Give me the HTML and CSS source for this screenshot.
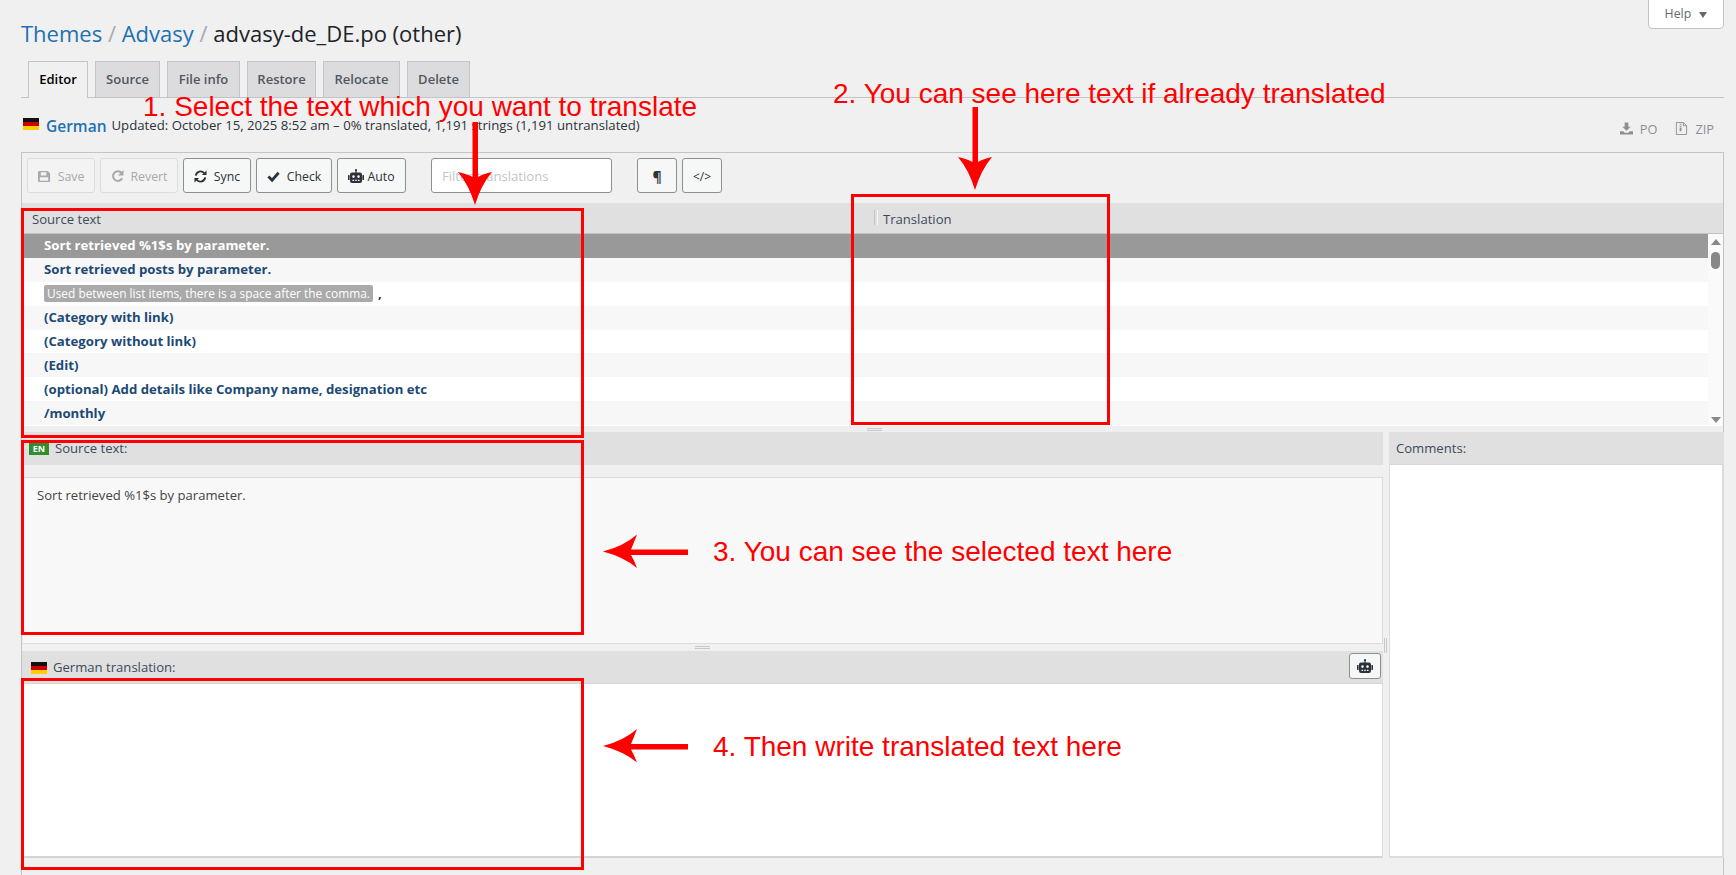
FILE: index.html
```html
<!DOCTYPE html>
<html lang="en">
<head>
<meta charset="utf-8">
<title>Advasy translation editor</title>
<link rel="stylesheet" href="styles.css">
</head>
<body>
<svg class="defs" width="0" height="0" aria-hidden="true">
  <symbol id="i-robot" viewBox="0 0 16 14">
    <rect x="0" y="6" width="1.6" height="5" rx=".6"/>
    <rect x="14.4" y="6" width="1.6" height="5" rx=".6"/>
    <circle cx="8" cy="1.1" r="1.1"/>
    <rect x="7.4" y="1" width="1.2" height="3"/>
    <path fill-rule="evenodd" d="M4 3.5h8a2 2 0 0 1 2 2V12a2 2 0 0 1-2 2H4a2 2 0 0 1-2-2V5.500a2 2 0 0 1 2-2zM5.500 6.300a1.300 1.300 0 1 0 0 2.600 1.300 1.300 0 0 0 0-2.600zM10.500 6.300a1.300 1.300 0 1 0 0 2.600 1.300 1.300 0 0 0 0-2.600zM4.500 10.800v1.200h1.600v-1.200zM7.200 10.800v1.200h1.600v-1.200zM9.900 10.800v1.200h1.600v-1.200z"/>
  </symbol>
</svg>

<button class="help">Help <span class="caret"></span></button>

<div class="wrap">
  <h1 class="title"><a>Themes</a> <span class="sep">/</span> <a>Advasy</a> <span class="sep">/</span> advasy-de_DE.po (other)</h1>

  <nav class="tabs">
    <a class="tab active">Editor</a>
    <a class="tab">Source</a>
    <a class="tab">File info</a>
    <a class="tab">Restore</a>
    <a class="tab">Relocate</a>
    <a class="tab">Delete</a>
  </nav>

  <div class="info">
    <span class="flag"></span>
    <a class="lang">German</a>
    <span class="status">Updated: October 15, 2025 8:52 am – 0% translated, 1,191 strings (1,191 untranslated)</span>
    <span class="downloads">
      <a class="dl"><svg class="dl-icon" viewBox="0 0 14 13"><path d="M5 0h4v4.500h2.500L7 9 2.500 4.500H5zM0 9.500h3.500L5 11h4l1.500-1.500H14V13H0z"/></svg>PO</a>
      <a class="dl zip"><svg class="dl-icon" viewBox="0 0 12 14"><path fill="none" stroke="currentColor" d="M.5.500h7.500l3.500 3.500v9.500H.5zM8 .5V4h3.500"/><path d="M4 2h2v1H4zM4 4h2v1H4zM4 6h2v4H4z"/></svg>ZIP</a>
    </span>
  </div>

  <div class="editor">
    <div class="toolbar">
      <button class="btn off w-save">
        <svg class="ico" viewBox="0 0 14 14"><path fill-rule="evenodd" d="M1.500 1h9L13 3.500v8A1.500 1.500 0 0 1 11.500 13h-10A1.500 1.500 0 0 1 0 11.500v-9A1.500 1.500 0 0 1 1.500 1zm1.500 1.300V6h6V2.300zM2 7.800v3.900h9V7.800z"/></svg>Save</button>
      <button class="btn off w-revert">
        <svg class="ico" viewBox="0 0 14 14"><path fill="none" stroke="currentColor" stroke-width="2.200" d="M11.500 3.300A5.200 5.200 0 1 0 12 9"/><path d="M13.500 0v6h-6z"/></svg>Revert</button>
      <button class="btn w-sync">
        <svg class="ico" viewBox="0 0 14 14"><path fill="none" stroke="currentColor" stroke-width="2" d="M2 6a5 5 0 0 1 9-2.500M12 8a5 5 0 0 1-9 2.500"/><path d="M13.500 0.500v5h-5zM.5 13.500v-5h5z"/></svg>Sync</button>
      <button class="btn w-check">
        <svg class="ico" viewBox="0 0 14 14"><path fill="none" stroke="currentColor" stroke-width="3" d="M1.500 7l4 4 7-8"/></svg>Check</button>
      <button class="btn w-auto">
        <svg class="ico robot"><use href="#i-robot"/></svg>Auto</button>
      <input class="filter" placeholder="Filter translations">
      <button class="btn square pil">¶</button>
      <button class="btn square code">&lt;/&gt;</button>
    </div>

    <div class="thead">
      <div class="th-source">Source text</div>
      <div class="th-grip"></div>
      <div class="th-target">Translation</div>
    </div>

    <div class="list">
      <div class="rows">
        <div class="row selected">Sort retrieved %1$s by parameter.</div>
        <div class="row">Sort retrieved posts by parameter.</div>
        <div class="row"><span class="ctx">Used between list items, there is a space after the comma.</span> <span class="comma">,</span></div>
        <div class="row">(Category with link)</div>
        <div class="row">(Category without link)</div>
        <div class="row">(Edit)</div>
        <div class="row">(optional) Add details like Company name, designation etc</div>
        <div class="row">/monthly</div>
      </div>
      <div class="scrollbar">
        <span class="sb-up"></span>
        <span class="sb-thumb"></span>
        <span class="sb-down"></span>
      </div>
    </div>

    <div class="hsplit"><span class="grip"></span></div>

    <div class="panes">
      <div class="main-pane">
        <div class="pane-head"><span class="en">EN</span>Source text:</div>
        <div class="source-box">Sort retrieved %1$s by parameter.</div>
        <div class="msplit"><span class="grip"></span></div>
        <div class="pane-head trans-head"><span class="flag small"></span>German translation:
          <button class="robot-btn"><svg class="ico robot"><use href="#i-robot"/></svg></button>
        </div>
        <div class="target-box"></div>
      </div>
      <div class="vsplit"><span class="vgrip"></span></div>
      <div class="side-pane">
        <div class="pane-head comments-head">Comments:</div>
        <div class="comments"></div>
      </div>
    </div>
  </div>
</div>

<svg class="marks" width="1736" height="875" viewBox="0 0 1736 875" aria-hidden="true">
  <g fill="none" stroke="#ff0000" stroke-width="3">
    <rect x="22.500" y="209.500" width="560" height="227"/>
    <rect x="852.500" y="195.500" width="256" height="228"/>
    <rect x="22.500" y="441.500" width="560" height="192"/>
    <rect x="22.500" y="679.500" width="560" height="189"/>
  </g>
  <g fill="#ff0000">
    <path d="M472.500 122h5.500v55q5 -3 14 -5q-11 13 -17 33q-6 -20 -17 -33q9 2 14.500 5z"/>
    <path d="M972.500 107h5.500v55q5 -3 14 -5q-11 13 -17 33q-6 -20 -17 -33q9 2 14.500 5z"/>
    <path d="M688 549.500v5.500h-57q3 5 6 13q-13 -11 -34 -16.500q21 -5.500 34 -17q-3 8 -6 15z"/>
    <path d="M688 744v5.500h-57q3 5 6 13q-13 -11 -34 -16.500q21 -5.500 34 -17q-3 8 -6 15z"/>
  </g>
</svg>
<span class="note n1">1. Select the text which you want to translate</span>
<span class="note n2">2. You can see here text if already translated</span>
<span class="note n3">3. You can see the selected text here</span>
<span class="note n4">4. Then write translated text here</span>
</body>
</html>
```

FILE: styles.css
```css
* { box-sizing: border-box; }
html, body { margin: 0; padding: 0; }
body {
  width: 1736px;
  height: 875px;
  overflow: hidden;
  background: #f0f0f1;
  position: relative;
  font-family: "Open Sans", "Noto Sans", sans-serif;
  font-size: 13.100px;
  color: #3c434a;
}
.defs { position: absolute; }
button { font-family: inherit; }

.help {
  position: absolute;
  top: -1px;
  left: 1648px;
  width: 76px;
  height: 30px;
  background: #fff;
  border: 1px solid #c3c4c7;
  border-radius: 0 0 4px 4px;
  color: #646970;
  font-size: 12.3px;
  padding: 0 0 2px;
}
.caret {
  display: inline-block;
  margin-left: 5px;
  border-left: 4px solid transparent;
  border-right: 4px solid transparent;
  border-top: 6px solid #646970;
}

.wrap { padding: 0 12px 0 21px; }
.title {
  margin: 0;
  height: 61px;
  padding-top: 19px;
  font-size: 22px;
  line-height: 29px;
  font-weight: 400;
  color: #1d2327;
}
.title a { color: #2271b1; }
.title .sep { color: #a7aaad; }

.tabs {
  display: flex;
  gap: 7px;
  height: 37px;
  padding-left: 7px;
  border-bottom: 1px solid #c3c4c7;
}
.tab {
  height: 36px;
  padding: 0 0 1px;
  display: flex;
  align-items: center;
  justify-content: center;
  background: #dcdcde;
  border: 1px solid #c3c4c7;
  border-bottom: 0;
  font-weight: 600;
  font-size: 13px;
  color: #50575e;
}
.tab:nth-child(1) { width: 60px; }
.tab:nth-child(2) { width: 65px; }
.tab:nth-child(3) { width: 73px; }
.tab:nth-child(4) { width: 69px; }
.tab:nth-child(5) { width: 77px; }
.tab:nth-child(6) { width: 63px; }
.tab.active {
  background: #f0f0f1;
  color: #000;
  height: 37px;
  padding-bottom: 2px;
}

.info {
  height: 54px;
  display: flex;
  align-items: center;
  padding: 0 10px 0 2px;
  margin-bottom: 0;
}
.flag {
  width: 16px;
  height: 12px;
  flex: none;
  margin-top: -2px;
  background: linear-gradient(#111 0 33.3%, #d00000 33.3% 66.6%, #ffce00 66.6%);
}
.lang {
  margin-left: 7px;
  padding-top: 1px;
  font-size: 15.500px;
  font-weight: 600;
  color: #2271b1;
}
.status { margin-left: 5px; font-size: 13.200px; color: #2c3338; }
.downloads {
  margin-left: auto;
  padding-top: 8px;
  display: flex;
  gap: 18px;
  font-size: 12.800px;
  color: #8c8f94;
}
.dl { display: flex; align-items: center; color: #8c8f94; }
.dl-icon { width: 13px; height: 13px; margin: -2px 7px 0 0; fill: currentColor; }

.editor {
  border: 1px solid #c3c4c7;
  border-bottom: 0;
  height: 723px;
}
.toolbar {
  height: 50px;
  display: flex;
  align-items: flex-start;
  padding: 5px 0 0 5px;
}
.btn {
  height: 35px;
  margin-right: 5px;
  display: flex;
  align-items: center;
  justify-content: center;
  padding: 1px 0 0;
  background: #f6f7f7;
  border: 1px solid #8c8f94;
  border-radius: 3px;
  font-size: 12.300px;
  color: #2c3338;
}
.btn.off {
  color: #a7aaad;
  border-color: #dcdcde;
  background: #f3f3f4;
}
.w-save { width: 68px; }
.w-revert { width: 78px; }
.w-sync { width: 68px; }
.w-check { width: 76px; }
.w-auto { width: 69px; }
.ico {
  width: 13px;
  height: 13px;
  margin-right: 7px;
  fill: currentColor;
}
.ico.robot { width: 16px; height: 14px; margin-right: 3px; fill: #2c3338; }
.filter {
  width: 181px;
  height: 35px;
  margin: 0 25px 0 20px;
  padding: 1px 10px 0;
  background: #fff;
  border: 1px solid #8c8f94;
  border-radius: 3px;
  font-family: inherit;
  font-size: 13.100px;
}
.filter::placeholder { color: #c3c4c7; opacity: 1; }
.square { width: 40px; }
.square.pil { font-weight: 700; font-size: 14px; }
.square.code { font-size: 12px; }

.thead {
  height: 31px;
  display: flex;
  align-items: flex-start;
  background: #e0e0e0;
  border-bottom: 1px solid #c3c4c7;
  padding-top: 8px;
  line-height: 17px;
  color: #3c4a5c;
}
.th-source { width: 852px; padding-left: 10px; }
.th-grip {
  width: 4px;
  height: 15px;
  margin-top: -1px;
  border-left: 1px solid #c3c4c7;
  border-right: 1px solid #f6f6f6;
}
.th-target { padding-left: 5px; }

.list { display: flex; height: 191px; }
.rows { flex: 1; }
.row {
  height: 23.875px;
  padding: 0 0 1px 22px;
  display: flex;
  align-items: center;
  background: #fff;
  font-weight: 700;
  font-size: 13.200px;
  color: #1c4a75;
}
.row:nth-child(even) { background: #f7f7f7; }
.row.selected { background: #999; color: #fff; }
.ctx {
  background: #aaa;
  color: #fff;
  font-weight: 400;
  font-size: 11.900px;
  line-height: 17px;
  padding: 0 3px;
  border-radius: 2px;
}
.comma { margin-left: 5px; color: #2c3338; }
.scrollbar {
  width: 15px;
  background: #fafafa;
  display: flex;
  flex-direction: column;
  align-items: center;
  padding-top: 5px;
}
.sb-up {
  border-left: 5px solid transparent;
  border-right: 5px solid transparent;
  border-bottom: 6px solid #888;
}
.sb-thumb {
  width: 9px;
  height: 17px;
  margin-top: 7px;
  border-radius: 5px;
  background: #888;
}
.sb-down {
  margin-top: auto;
  margin-bottom: 2px;
  border-left: 5px solid transparent;
  border-right: 5px solid transparent;
  border-top: 6px solid #888;
}

.hsplit {
  height: 7px;
  display: flex;
  justify-content: center;
  padding: 2px 0 0 4px;
  background: #efefef;
  border-top: 1px solid #fff;
}
.grip {
  width: 15px;
  height: 3px;
  border-top: 1px solid #c8c8c8;
  border-bottom: 1px solid #c8c8c8;
}

.panes { display: flex; height: 426px; }
.main-pane { width: 1361px; flex: none; display: flex; flex-direction: column; }
.vsplit { width: 6px; flex: none; position: relative; }
.vgrip {
  position: absolute;
  top: 206px;
  left: 1px;
  width: 3px;
  height: 15px;
  border-left: 1px solid #c8c8c8;
  border-right: 1px solid #c8c8c8;
}
.side-pane { width: 335px; flex: none; display: flex; flex-direction: column; }

.pane-head {
  height: 33px;
  flex: none;
  display: flex;
  align-items: center;
  background: #e0e0e0;
  color: #3c4a5c;
  padding-bottom: 1px;
  padding-left: 7px;
}
.comments-head { padding-left: 7px; border-bottom: 1px solid #d8d8d8; }
.en {
  width: 20px;
  height: 13px;
  margin-right: 6px;
  background: #2f8f2f;
  color: #fff;
  font-size: 9px;
  font-weight: 700;
  line-height: 13px;
  text-align: center;
}
.source-box {
  height: 167px;
  margin-top: 12px;
  padding: 9px 14px;
  background: #f8f8f8;
  border: 1px solid #dcdcde;
  border-left-color: #eee;
  line-height: 17px;
  color: #444;
}
.msplit {
  height: 7px;
  display: flex;
  justify-content: center;
  padding-top: 2px;
}
.trans-head { padding-left: 9px; padding-bottom: 0; border-bottom: 1px solid #d8d8d8; position: relative; }
.flag.small { margin: 2px 6px 0 0; }
.robot-btn {
  position: absolute;
  right: 2px;
  top: 2px;
  width: 32px;
  height: 26px;
  display: flex;
  align-items: center;
  justify-content: center;
  padding: 0;
  background: #f6f7f7;
  border: 1px solid #8c8f94;
  border-radius: 3px;
}
.robot-btn .ico.robot { margin: 0; }
.target-box {
  height: 174px;
  background: #fff;
  border-right: 1px solid #dcdcde;
  border-bottom: 2px solid #d4d4d4;
}
.comments {
  height: 393px;
  background: #fff;
  border: 1px solid #dcdcde;
  border-top: 0;
  border-right-width: 2px;
  border-bottom-width: 2px;
}

.marks { position: absolute; left: 0; top: 0; pointer-events: none; }
.note {
  position: absolute;
  font-family: "Liberation Sans", Arial, sans-serif;
  font-size: 28px;
  line-height: 32px;
  color: #ff0000;
  white-space: nowrap;
}
.n1 { left: 143px; top: 91px; }
.n2 { left: 833px; top: 78px; }
.n3 { left: 713px; top: 536px; }
.n4 { left: 713px; top: 731px; }
```
